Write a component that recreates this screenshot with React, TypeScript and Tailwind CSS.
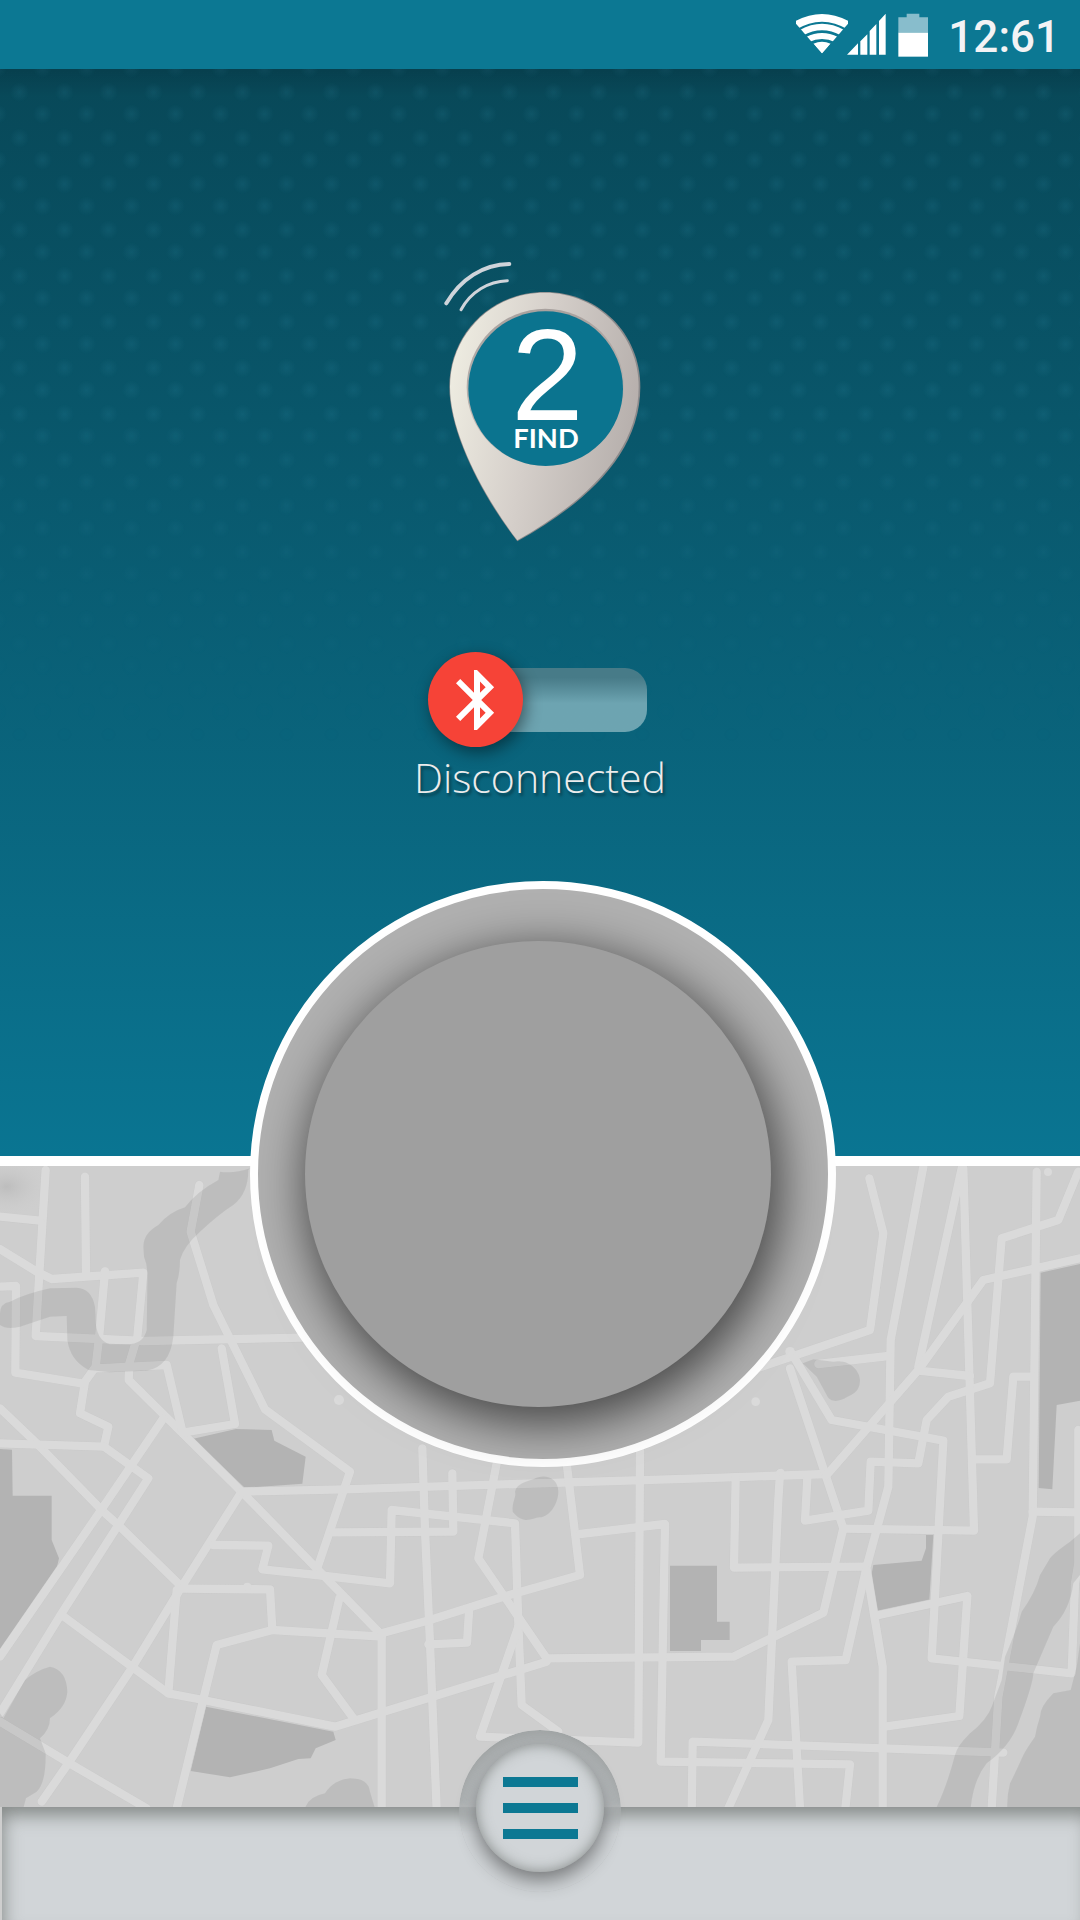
import { useState } from "react";
import { MdBluetooth } from "react-icons/md";

const ROADS = [
  "M137 60L118 370L107 558L430 573L910 563",
  "M0 200L120 212",
  "M255 80L258 370",
  "M0 297L105 362L155 387L430 368L412 560L388 640L386 690L725 1025L1145 1455",
  "M315 365L298 555L287 650L255 695L240 790L325 830L312 890L445 985L355 1125L185 1390L0 1690",
  "M0 410L48 408L46 668L245 700",
  "M290 655L500 645L548 848L705 822L665 595",
  "M598 105L572 245L640 465L795 778L1050 965L950 1260",
  "M0 775L110 880L310 1085L355 1125L545 1310",
  "M0 880L312 890",
  "M490 805L300 1085L0 1520",
  "M725 1025L545 1310L395 1555L205 1840L125 1955",
  "M725 1025L1030 1018L2100 985L2480 972",
  "M640 1185L805 1187L787 1258L950 1275L1170 1300L1175 1080L1545 1120L1555 1420L1565 1665L1675 1745",
  "M545 1316L810 1318L817 1440L1145 1460",
  "M817 1440L650 1485L608 1655L530 1975",
  "M530 1320L505 1630",
  "M185 1395L395 1550L505 1630L610 1650L1005 1730L1640 1535",
  "M0 1715L205 1838L440 1975",
  "M1018 1345L965 1575L1060 1705",
  "M1000 1147L1360 1145L1357 970",
  "M1267 895L1275 1140L1290 1480L1310 1980",
  "M1145 1455L1145 1980",
  "M1145 1450L1290 1410L1510 1340L1740 1275L1700 940",
  "M1490 940L1435 1225L1510 1335L1640 1525L2200 1520L2470 1388L2530 1135L2370 655",
  "M1407 1385L1401 1478L1285 1483",
  "M1555 1430L1440 1760L1915 1778L1920 900",
  "M1740 1152L1995 1122L1982 1835L2550 1843L2535 1985",
  "M2075 1990L2078 1775L3010 1808",
  "M2207 985L2202 1253L2595 1250",
  "M2340 970L2335 1050L2305 1710L2185 1975",
  "M2422 985L2415 1112L2605 1082L2612 935L2755 940L2780 810L2845 740L2970 700L3005 265L3175 210L3235 65",
  "M2608 85L2650 250L2610 540L2270 655",
  "M2770 50L2672 570L2665 1010L2600 1250L2537 1530L2375 1535L2400 1975",
  "M2600 1260L2648 1550L2648 1975",
  "M2637 1395L2902 1338L2878 1698L2655 1730",
  "M2885 55L2755 650",
  "M2890 55L2922 1142L2530 1136",
  "M2480 975L2755 660L2950 390L3240 325",
  "M2755 662L2910 678",
  "M2455 642L2665 618",
  "M2375 610L2495 810L2830 872L2795 1525L3215 1570L3225 1300L3235 1240L3235 840",
  "M3110 65L3098 1100L2995 1640L2975 1975",
  "M3098 1085L3240 1087",
  "M2920 928L3020 928L3040 680L3100 680",
];

const BUILDINGS = [
  "M580 866L708 837L815 840L823 872L917 920L907 1001L735 1014Z",
  "M0 897L36 899L38 1037L155 1037V1170L177 1225L170 1255L0 1500Z",
  "M618 1670L1000 1745L1007 1770L947 1795L932 1825L895 1827L810 1855L690 1882L572 1863Z",
  "M2010 1247H2151V1415H2189V1470H2103V1503H2010Z",
  "M2613 1280L2620 1245L2765 1232L2778 1195V1155H2800L2788 1350L2632 1383Z",
  "M3122 368L3240 342V752L3170 765L3157 1018L3116 1014Z",
];

const NODES = [
  [1017, 750, 15],
  [2267, 755, 13],
  [3144, 66, 12],
  [2370, 605, 14],
  [315, 365, 13],
  [742, 1310, 12],
  [2342, 967, 11],
];

function StreetMap() {
  return (
    <svg
      className="block min-h-[641px] w-full flex-1 bg-[#cecece]"
      viewBox="0 48 3240 1923"
      preserveAspectRatio="xMidYMid slice"
      role="img"
      aria-label="Street map"
    >
      <defs>
        <radialGradient id="haze">
          <stop offset="0" stopColor="#bdbdbd" />
          <stop offset="1" stopColor="#cecece" stopOpacity="0" />
        </radialGradient>
      </defs>
      <ellipse cx="20" cy="110" rx="130" ry="90" fill="url(#haze)" />
      <g fill="#b3b3b3">
        {BUILDINGS.map((d) => (
          <path key={d} d={d} />
        ))}
      </g>
      <g fill="none" strokeLinecap="round" strokeLinejoin="round">
        <g stroke="#c9c9c9" strokeWidth="27">
          {ROADS.map((d) => (
            <path key={d} d={d} />
          ))}
        </g>
        <g stroke="#dadada" strokeWidth="25">
          {ROADS.map((d) => (
            <path key={d} d={d} />
          ))}
        </g>
      </g>
      <g fill="#dadada">
        {NODES.map(([x, y, r]) => (
          <circle key={x} cx={x} cy={y} r={r} />
        ))}
      </g>
      <g fill="#000" fillOpacity=".08">
        <path d="M750 55Q700 72 660 65L655 90Q590 125 555 172Q510 185 475 225Q430 250 430 290L432 320Q445 350 442 400L440 540Q430 583 380 583L330 583Q285 570 287 500L285 470Q275 415 230 413L150 415Q80 430 30 455Q0 460 0 490L0 525Q20 540 60 530L150 500L200 498L202 570Q210 630 265 660L330 667L440 662Q510 650 520 560L530 400Q540 370 540 330Q550 290 600 245Q660 190 700 165Q745 130 745 60Z" />
        <path d="M10 1705L75 1590Q110 1560 150 1550Q200 1560 202 1625Q200 1670 150 1705Q150 1740 120 1765L137 1810Q138 1900 110 1925L78 1945L70 1975L0 1975V1690Z" />
        <path d="M915 1975Q925 1940 975 1930Q1000 1890 1050 1885Q1105 1885 1110 1925L1125 1975Z" />
        <path d="M1538 1085C1535 1055 1550 1040 1545 1025C1550 1000 1580 995 1600 988C1630 970 1675 980 1675 1025C1675 1060 1650 1100 1620 1102C1595 1105 1570 1125 1538 1085Z" />
        <path d="M2408 640L2440 628L2500 635C2550 625 2580 665 2580 690C2580 730 2550 735 2540 742C2520 755 2490 760 2480 735L2450 680Z" />
        <g transform="translate(2040 1050)">
          <path d="M1200 100L1170 125Q1120 160 1110 175L1080 225Q1065 280 1025 335Q1010 390 975 470L965 540L935 620Q920 660 870 700Q830 740 825 765Q800 860 768 925L872 925Q880 840 920 790Q990 740 1015 670Q1060 550 1060 520L1120 380Q1170 330 1180 250L1200 225Z" />
          <path d="M1200 430L1190 500L1172 570L1120 580Q1080 620 1080 650Q1070 680 1065 710Q1040 745 1030 765Q1010 810 990 850Q980 890 982 925L1200 925Z" />
        </g>
      </g>
    </svg>
  );
}

function StatusIcons() {
  return (
    <svg className="h-[44px] w-[132px]" viewBox="0 0 396 132" aria-hidden="true">
      <defs>
        <clipPath id="wedge">
          <path d="M78 122L0 32V0H156V32Z" />
        </clipPath>
      </defs>
      <g clipPath="url(#wedge)" fill="none" stroke="#fff">
        <path d="M78 122L52 92Q78 80 104 92Z" fill="#fff" stroke="none" />
        <path d="M34 80Q78 58 122 80" strokeWidth="18" />
        <path d="M16 59Q78 25 140 59" strokeWidth="19" />
        <path d="M-6 40Q78 -11 162 40" strokeWidth="23" />
      </g>
      <path
        fill="#fff"
        d="M153 125L186 91V125ZM193 85L214 64V125H193ZM221 54L241 33V125H221ZM249 24L269 2V125H249Z"
      />
      <path fill="#88bdcc" d="M307 13H332V2H370V13H396V59H307Z" />
      <path fill="#fff" d="M307 59H396V131H307Z" />
    </svg>
  );
}

function Logo() {
  return (
    <svg className="relative h-[284px] w-[202px] overflow-visible" viewBox="57 60 606 852" role="img" aria-label="2 Find">
      <defs>
        <linearGradient id="pin" x1="0" y1=".3" x2="1" y2=".55">
          <stop offset="0" stopColor="#eeece1" />
          <stop offset=".45" stopColor="#d5cfca" />
          <stop offset="1" stopColor="#b5aeab" />
        </linearGradient>
        <linearGradient id="rim" x1="0" y1="0" x2="0" y2="1">
          <stop offset="0" stopColor="#a8a19e" />
          <stop offset="1" stopColor="#c4bdb9" />
        </linearGradient>
      </defs>
      <g fill="none" stroke="#cfd4da" strokeLinecap="round">
        <path d="M79 190C122 117 190 73 268 72" strokeWidth="12" />
        <path d="M123 209C152 155 205 124 262 122" strokeWidth="9" />
      </g>
      <path
        d="M375 156C537 156 661 282 661 440C661 640 500 788 292 904C188 770 88 580 88 440C88 282 213 156 375 156Z"
        fill="#8c8a8b"
      />
      <path
        d="M374 158C533 158 656 284 656 440C656 636 497 784 292 901C190 768 90 580 90 440C90 284 215 158 374 158Z"
        fill="url(#pin)"
      />
      <circle cx="376" cy="442" r="236" fill="url(#rim)" />
      <circle cx="377" cy="446" r="232" fill="#0b748f" />
      <text x="382" y="540" textAnchor="middle" fontSize="390" fill="#fff" className="font-['Liberation_Sans',sans-serif]">
        2
      </text>
      <text x="378" y="624" textAnchor="middle" fontSize="82" fill="#fff" className="font-['Lato',sans-serif] font-bold">
        FIND
      </text>
    </svg>
  );
}

export default function App() {
  const [on, setOn] = useState(false);
  return (
    <div className="flex min-h-screen flex-col bg-[#cecece]">
      <header className="flex h-[69px] items-center justify-end gap-5 bg-[#0c7893] pr-5">
        <StatusIcons />
        <time className="pt-1 font-['Roboto',sans-serif] text-[44px] leading-none font-medium text-[#f3f3f5]">12:61</time>
      </header>

      <main className="flex flex-1 flex-col">
        <section className="relative z-10 flex flex-col items-center border-b-[10px] border-white bg-[#0a7592] bg-linear-to-b from-[#084858] to-[#0a7592] pt-[191px]">
          <div className="pointer-events-none absolute inset-x-0 top-0 h-[680px] bg-[radial-gradient(circle,rgba(50,140,165,0.17)_0,transparent_10px),radial-gradient(circle,rgba(50,140,165,0.17)_0,transparent_10px),radial-gradient(circle,rgba(50,140,165,0.17)_0,transparent_10px),radial-gradient(circle,rgba(50,140,165,0.17)_0,transparent_10px)] mask-b-from-50% bg-size-[89px_46px] bg-position-[-25px_0px,20px_0px,-2px_22px,42px_22px]" />
          <div className="pointer-events-none absolute inset-x-0 top-0 h-7 bg-linear-to-b from-black/12 to-transparent" />
          <Logo />

          <button
            type="button"
            role="switch"
            aria-checked={on}
            aria-labelledby="link-state"
            onClick={() => setOn(!on)}
            className="relative mt-[108px] mr-1.5 flex w-[219px] items-center"
          >
            <span className="z-10 flex size-[95px] items-center justify-center rounded-full bg-[#f64337] pl-1 text-white shadow-[3px_5px_16px_rgba(0,0,0,0.45)]">
              <MdBluetooth size={72} aria-hidden="true" />
            </span>
            <span className="-ml-12 h-16 flex-1 rounded-r-[22px] bg-linear-to-b from-[#477b88] from-15% to-[#6da4b1] to-55%" />
          </button>

          <p
            id="link-state"
            className="relative mt-[2px] font-['Open_Sans',sans-serif] text-[41px] leading-[56px] font-light text-[#ececec] [text-shadow:2px_3px_3px_rgba(0,0,0,0.4)]"
          >
            Disconnected
          </p>

          <div className="relative mt-[76px] -mb-[311px] pl-1.5">
            <div className="flex size-[586px] items-center justify-center rounded-full border-[8px] border-white bg-[#b0b0b0] pr-2.5">
              <button
                type="button"
                aria-label="Find"
                className="size-[466px] rounded-full bg-[#9f9f9f] shadow-[5px_12px_46px_6px_rgba(0,0,0,0.58)]"
              />
            </div>
          </div>
        </section>

        <StreetMap />
      </main>

      <footer className="relative z-10 ml-0.5 h-[113px] bg-[#d1d5d8] shadow-[inset_5px_12px_18px_-4px_rgba(70,75,70,0.55)]">
        <nav className="absolute inset-x-0 -top-[77px] flex justify-center pr-0.5">
          <div className="size-[162px] rounded-full bg-[#d1d5d8] shadow-[inset_0_8px_30px_2px_rgba(70,75,70,0.45)] mask-b-from-44% mask-b-to-64%" />
          <button
            type="button"
            aria-label="Menu"
            className="absolute top-[14px] flex size-32 flex-col items-center justify-center gap-4 rounded-full bg-[#d1d5d8] shadow-[0_8px_20px_rgba(0,0,0,0.45),inset_0_0_14px_rgba(70,75,70,0.55)]"
          >
            <span className="h-2.5 w-[75px] bg-[#0c7893]" />
            <span className="h-2.5 w-[75px] bg-[#0c7893]" />
            <span className="h-2.5 w-[75px] bg-[#0c7893]" />
          </button>
        </nav>
      </footer>
    </div>
  );
}
